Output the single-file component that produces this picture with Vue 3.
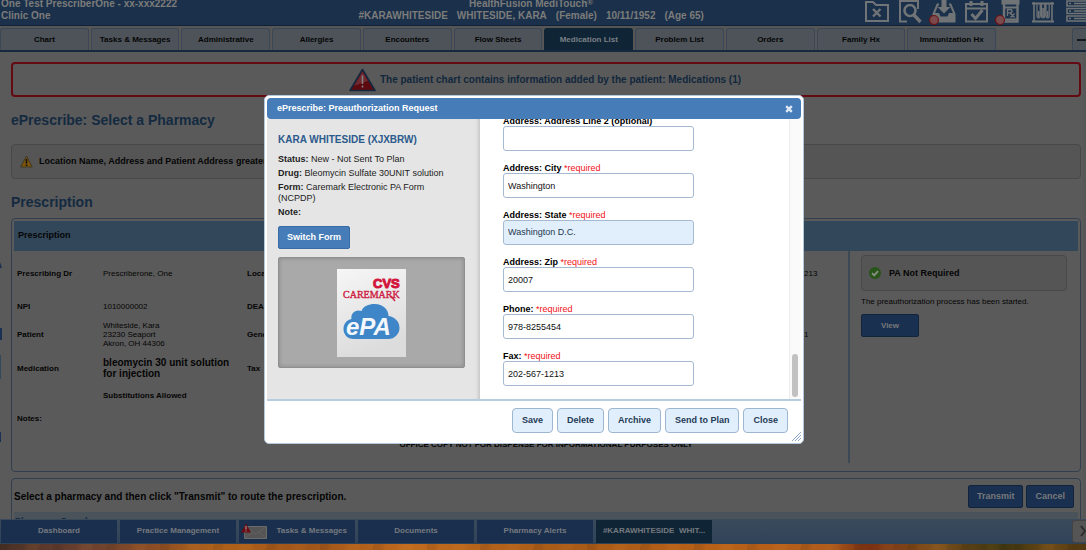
<script setup>
import { ref } from 'vue'

const tabs = ['Chart', 'Tasks & Messages', 'Administrative', 'Allergies', 'Encounters', 'Flow Sheets', 'Medication List', 'Problem List', 'Orders', 'Family Hx', 'Immunization Hx']
const activeTab = 'Medication List'
const patient = ['#KARAWHITESIDE', 'WHITESIDE, KARA', '(Female)', '10/11/1952', '(Age 65)']
const fields = ref([
  { id: 'line2', label: 'Address: Address Line 2 (optional)', required: false, value: '' },
  { id: 'city', label: 'Address: City', required: true, value: 'Washington' },
  { id: 'state', label: 'Address: State', required: true, value: 'Washington D.C.', options: ['Washington D.C.'] },
  { id: 'zip', label: 'Address: Zip', required: true, value: '20007' },
  { id: 'phone', label: 'Phone:', required: true, value: '978-8255454' },
  { id: 'fax', label: 'Fax:', required: true, value: '202-567-1213' }
])
const actions = ['Save', 'Delete', 'Archive', 'Send to Plan', 'Close']
const tasks = [
  { name: 'Dashboard' },
  { name: 'Practice Management' },
  { name: 'Tasks & Messages', mail: true },
  { name: 'Documents' },
  { name: 'Pharmacy Alerts' },
  { name: '#KARAWHITESIDE  WHIT...', active: true }
]
</script>

<template>
  <div class="page">
    <header class="top">
      <div class="who">One Test PrescriberOne - xx-xxx2222<br>Clinic One</div>
      <div class="chart-title">
        <div>HealthFusion MediTouch<sup>®</sup></div>
        <div class="patient"><span v-for="p in patient" :key="p">{{ p }}</span></div>
      </div>
      <div class="tools">
        <button type="button" aria-label="Close chart">
          <svg viewBox="0 0 24 26"><path d="M2 2h7l3 3h12v16H2z" /><path d="M9 9l7.500 7.500M16.500 9L9 16.500" stroke-width="2.400" /></svg>
        </button>
        <button type="button" aria-label="Search">
          <svg viewBox="0 0 24 26"><path d="M10 21.500H3V1h18v8" /><circle cx="13" cy="10.500" r="5.500" stroke-width="2.600" /><path d="M17 15l6.500 7" stroke-width="3.400" /></svg>
        </button>
        <button type="button" aria-label="Inbox">
          <svg viewBox="0 0 24 26"><path d="M9 4.500H7.500L3.500 14v7.500h21V14l-4-9.500H19" /><path class="solid" d="M3 13h6l1.500 3.500h7L19 13h6v9H3z" /><path class="solid" d="M11.500 0h5v7h4L14 13.500 7.500 7h4z" /><circle class="dot" cx="4" cy="20" r="4.500" /></svg>
        </button>
        <button type="button" aria-label="Calendar">
          <svg viewBox="0 0 24 26"><path d="M3 4h21v17.500H3zM3 8.500h21" /><path d="M8 1v5M19 1v5" stroke-width="3" /><path d="M8.500 14l4 4.500 7-8.500" stroke-width="3" /></svg>
        </button>
        <button type="button" aria-label="Prescriptions">
          <svg viewBox="0 0 24 26"><path d="M5.500 0h18v4.500h-18z" class="solid" /><path d="M8 4v17.500h13.500V4" stroke-width="2.400" /><path d="M8 7.500h13M8 19.500h13" stroke-width="1.800" /><path d="M11.500 16V9.500h2.500q2 0 2 1.700t-2 1.700h-2.500M14 13l4.500 4.500M18.500 13.500l-4 4" stroke-width="1.300" /><circle class="dot" cx="4" cy="20" r="4.500" /></svg>
        </button>
        <button type="button" aria-label="Labs">
          <svg viewBox="0 0 24 26"><path d="M3 3.500h22M3 21.500h22" /><path d="M5 2v19M23 2v19" stroke-width="1.600" /><path d="M8 4v12a1.600 2 0 0 0 3.200 0V4M12.500 4v12a1.600 2 0 0 0 3.200 0V4M17 4v12a1.600 2 0 0 0 3.200 0V4" stroke-width="1.200" /><path d="M9.600 11v6M14.100 8v9M18.600 11v6" stroke-width="1.600" /></svg>
        </button>
        <button type="button" aria-label="Records">
          <svg viewBox="0 0 24 26"><path d="M5 1h22v5H5zM5 8.500h22v5H5zM5 16h22v5H5z" stroke-width="1.600" /><path d="M7 3.500h2M12 3.500h12M7 11h2M12 11h12M7 18.500h2M12 18.500h12" stroke-width="1.300" /></svg>
        </button>
      </div>
    </header>

    <nav class="tabs">
      <button v-for="t in tabs" :key="t" type="button" :class="{ active: t === activeTab }">{{ t }}</button>
      <button type="button" class="more" aria-label="More tabs"><svg viewBox="0 0 10 8"><path d="M0 4h12" /></svg></button>
    </nav>

    <main>
      <svg class="edge" viewBox="0 0 2 190" aria-hidden="true">
        <path d="M0 0l2 6H0z" fill="#1a3153" /><path d="M0 66h2v12H0z" fill="#1a3153" /><path d="M0 93h1v24H0z" fill="#33475c" /><path d="M0 170h1v10H0z" fill="#1a3153" />
      </svg>
      <div class="alert">
        <svg class="warn" viewBox="0 0 27 24"><path d="M13.500 1.500L26 22.500H1z" fill="#5c0a10" stroke="#14283e" stroke-width="1.600" stroke-linejoin="round" /><path d="M13.500 3.500L19 13Q12 15 5 18z" fill="#6e2a30" /><path d="M13.500 7.500v8.500M13.500 17.500v2" stroke="#858080" stroke-width="1.600" /></svg>
        <span>The patient chart contains information added by the patient: Medications (1)</span>
      </div>

      <h1>ePrescribe: Select a Pharmacy</h1>
      <div class="note">
        <svg viewBox="0 0 13 13"><path d="M6.500 1L12.300 12H.7z" fill="#7a540c" stroke="#3f3a22" stroke-linejoin="round" /><path d="M6.500 4v4.500M6.500 9.500v1.500" stroke="#111" stroke-width="1.500" /></svg>
        <span>Location Name, Address and Patient Address greater</span>
      </div>

      <h2>Prescription</h2>
      <section class="panel rx">
        <h3>Prescription</h3>
        <div class="rx-body">
          <div class="details">
            <table>
              <colgroup><col class="c1"><col class="c2"><col class="c3"><col></colgroup>
              <tbody>
                <tr class="r1"><th>Prescribing Dr</th><td>Prescriberone, One</td><th>Location</th><td>213</td></tr>
                <tr class="r2"><th>NPI</th><td>1010000002</td><th>DEA</th><td></td></tr>
                <tr class="r3"><th>Patient</th><td>Whiteside, Kara<br>23230 Seaport<br>Akron, OH 44306</td><th>Gender</th><td>1</td></tr>
                <tr class="r4"><th>Medication</th><td class="drug">bleomycin 30 unit solution for injection</td><th>Tax</th><td></td></tr>
                <tr class="r5"><th></th><td><b>Substitutions Allowed</b></td><th></th><td></td></tr>
                <tr class="r6"><th>Notes:</th><td></td><th></th><td></td></tr>
              </tbody>
            </table>
            <p class="office">OFFICE COPY NOT FOR DISPENSE FOR INFORMATIONAL PURPOSES ONLY</p>
          </div>
          <aside>
            <div class="pa">
              <svg viewBox="0 0 12 12"><circle cx="6" cy="6" r="6" fill="#29551a" /><path d="M3 6.200l2.200 2.200L9 4.200" fill="none" stroke="#8a8f88" stroke-width="1.800" /></svg>
              <span>PA Not Required</span>
            </div>
            <p>The preauthorization process has been started.</p>
            <button type="button" class="dark view">View</button>
          </aside>
        </div>
      </section>

      <section class="panel route">
        <div class="route-row">
          <strong>Select a pharmacy and then click "Transmit" to route the prescription.</strong>
          <div class="route-actions">
            <button type="button" class="dark">Transmit</button>
            <button type="button" class="dark">Cancel</button>
          </div>
        </div>
        <h3 class="search">Pharmacy Search</h3>
      </section>
    </main>

    <nav class="taskbar">
      <button v-for="t in tasks" :key="t.name" type="button" :class="{ active: t.active, mail: t.mail }">
        <svg v-if="t.mail" viewBox="0 0 26 16"><path d="M3.500 3.500h22v12h-22z" fill="#555" stroke="#6a6a6a" /><path d="M4 4l10.500 7L25 4M4 15l8-6M25 15l-8-6" fill="none" stroke="#626262" stroke-width="0.800" /><path d="M5 0.500L10 9.500H0z" fill="#6a0c12" /><path d="M5 3v3.500M5 7.500v1" stroke="#aaa" /></svg>
        <span>{{ t.name }}</span>
      </button>
      <button type="button" class="next" aria-label="Next"><svg viewBox="0 0 14 22"><path d="M8 6l4 5-4 5" /></svg></button>
    </nav>
    <div class="wood"></div>

    <div class="dialog" role="dialog" aria-labelledby="dlg-title">
      <div class="dlg-head">
        <span id="dlg-title">ePrescribe: Preauthorization Request</span>
        <button type="button" aria-label="Close"><svg viewBox="0 0 8 8"><path d="M1.200 1.200l5.600 5.600M6.800 1.200L1.200 6.800" /></svg></button>
      </div>
      <div class="dlg-body">
        <div class="summary">
          <h4>KARA WHITESIDE (XJXBRW)</h4>
          <p><b>Status:</b> New - Not Sent To Plan</p>
          <p><b>Drug:</b> Bleomycin Sulfate 30UNIT solution</p>
          <p><b>Form:</b> Caremark Electronic PA Form (NCPDP)</p>
          <p><b>Note:</b></p>
          <button type="button" class="switch">Switch Form</button>
          <div class="logo">
            <svg viewBox="0 0 69 88">
              <defs><linearGradient id="paper" x1="0" y1="0" x2="0.300" y2="1"><stop offset="0" stop-color="#f6f6f6" /><stop offset="1" stop-color="#dcdcdc" /></linearGradient></defs>
              <rect width="69" height="88" fill="url(#paper)" />
              <text x="36" y="19" class="cvs">CVS</text>
              <text x="6" y="29" class="caremark">CAREMARK</text>
              <path d="M54 27l4 5" stroke="#cf1f45" stroke-width="1.400" />
              <path d="M17 70C10 70 6.500 65 6.500 60c0-5 3-9 8-10-1-6 4-10 10-8 2-5 7-7 13-7 9 0 14 6 14 12 7 1 11 6 11 12 0 6-5 11-11 11z" fill="#3f86c8" />
              <text x="9" y="66" class="epa">ePA</text>
            </svg>
          </div>
        </div>
        <form class="fields" @submit.prevent>
          <div v-for="f in fields" :key="f.id" class="field">
            <label :for="f.id">{{ f.label }} <span v-if="f.required">*required</span></label>
            <select v-if="f.options" :id="f.id" v-model="f.value"><option v-for="o in f.options" :key="o">{{ o }}</option></select>
            <input v-else :id="f.id" v-model="f.value" type="text">
          </div>
        </form>
        <div class="scroll"><div class="thumb"></div></div>
      </div>
      <div class="dlg-foot">
        <button v-for="a in actions" :key="a" type="button">{{ a }}</button>
        <svg class="grip" viewBox="0 0 9 9"><path d="M0 9L9 0M3 9l6-6M6 9l3-3" /></svg>
      </div>
    </div>
  </div>
</template>

<style>
body { background: #5a5a5a; }
</style>

<style scoped>
* { box-sizing: border-box; }
.page {
  position: relative;
  display: flex;
  flex-direction: column;
  height: 100vh;
  overflow: hidden;
  background: #5a5a5a;
  color: #050505;
  font: 8px/9px "Liberation Sans", Arial, sans-serif;
}
button { font: inherit; font-weight: bold; padding: 0; margin: 0; border: 0; white-space: nowrap; }
svg { display: block; flex: none; }
h1, h2, h3, h4, p { margin: 0; }

.top {
  display: grid;
  grid-template-columns: 33% auto 1fr;
  align-items: end;
  align-content: end;
  height: 26px;
  flex: none;
  padding-bottom: 1px;
  background: #1b304b;
  border-bottom: 1px solid #0f2238;
  color: #7c7c7a;
  font-size: 10px;
  line-height: 12px;
  font-weight: bold;
  white-space: nowrap;
  overflow: hidden;
}
.who { padding: 0 0 2px 1px; }
.chart-title { text-align: center; padding-bottom: 2px; }
.chart-title sup { font-size: 8px; line-height: 0; vertical-align: 2px; }
.patient { display: flex; gap: 9px; }
.tools { display: flex; align-items: flex-start; justify-content: flex-end; gap: 9px; height: 24px; }
.tools button { background: none; width: 24px; }
.tools svg { width: 24px; height: 26px; overflow: visible; fill: none; stroke: #717476; stroke-width: 2; }
.tools .solid { fill: #717476; stroke: none; }
.tools .dot { fill: #7a4a4c; stroke: #6b1518; stroke-width: 1.200; }

.tabs {
  display: flex;
  gap: 2px;
  height: 26px;
  flex: none;
  padding-top: 2px;
  background: #565656;
  border-bottom: 2px solid #16293f;
}
.tabs button {
  flex: 1 1 0;
  min-width: 0;
  background: #4d5359;
  border: 1px solid #3b4756;
  border-bottom: 0;
  border-radius: 3px 3px 0 0;
  color: #050505;
}
.tabs button.active { background: #0f2536; border-color: #0f2536; color: #7a8086; }
.tabs button.more { flex: 0 0 14px; margin-left: 74px; border-right: 0; border-radius: 3px 0 0 0; }
.more svg { width: 10px; height: 8px; margin-left: 4px; stroke: #15181c; stroke-width: 2; }

main {
  position: relative;
  flex: 1 1 0;
  min-height: 0;
  overflow: hidden;
  padding: 10px 2px 0 11px;
  border-right: 3px solid #575757;
}
.edge { position: absolute; left: 0; top: 210px; width: 2px; height: 190px; }
.alert {
  display: flex;
  align-items: center;
  justify-content: center;
  gap: 4px;
  height: 35px;
  padding-right: 2px;
  border: 2px solid #640a12;
  border-radius: 4px;
  color: #12273c;
  font-size: 10px;
  font-weight: bold;
}
.warn { width: 27px; height: 24px; }
h1, h2 { color: #142a41; font-size: 14px; line-height: 16px; }
h1 { margin-top: 15px; }
.note, .pa {
  display: flex;
  align-items: center;
  background: #555;
  border: 1px solid #484848;
  border-radius: 4px;
  font-size: 9px;
  font-weight: bold;
}
.note { height: 35px; margin-top: 16px; padding: 0 8px; gap: 6px; }
.note svg { width: 13px; height: 13px; }
h2 { margin-top: 15px; }
.panel { border: 1px solid #313f4e; border-radius: 4px; padding: 2px; }
.rx { margin-top: 8px; height: 254px; }
.panel h3 { height: 30px; padding: 0 4px; background: #33475a; font-size: 9px; line-height: 28px; }
.rx-body { display: flex; }
.details { flex: 1 1 0; height: 212px; border-right: 2px solid #3b4856; padding: 4px 0 0 3px; }
table { width: 100%; table-layout: fixed; border-collapse: collapse; }
th, td { padding: 0; text-align: left; vertical-align: middle; }
.c1 { width: 86px; }
.c2 { width: 144px; }
.c3 { width: 557px; }
.r1 { height: 37px; }
.r2 { height: 29px; }
.r3 { height: 27px; }
.r4 { height: 40px; }
.r5 { height: 14px; }
.r6 { height: 32px; }
.r4 .drug { padding-right: 12px; font-size: 10px; line-height: 11px; font-weight: bold; }
.office { margin-left: 227px; padding-top: 6px; text-align: center; font-weight: bold; }
aside { flex: 0 0 228px; padding: 4px 11px 0; }
.pa { height: 36px; padding: 0 7px; gap: 8px; }
.pa svg { width: 12px; height: 12px; }
aside p { margin: 6px 0 7px; line-height: 10px; }
.dark {
  height: 23px;
  background: #1a3050;
  border: 1px solid #12243c;
  border-radius: 2px;
  color: #77797b;
  font-size: 9px;
}
.view { width: 58px; font-size: 8px; }
.route { margin-top: 6px; height: 80px; }
.route-row { display: flex; align-items: center; justify-content: space-between; height: 31px; padding: 0 4px 0 0; font-size: 10px; }
.route-actions { display: flex; gap: 3px; }
.route-actions .dark { padding: 0 8px; }
.panel h3.search { padding: 4px 1px; background: #4a525a; line-height: 10px; color: #142a41; }

.taskbar {
  display: flex;
  align-items: center;
  gap: 3px;
  height: 25px;
  flex: none;
  padding-left: 1px;
  background: linear-gradient(#3a4a5b, #2f4358);
}
.taskbar button { display: flex; align-items: center; justify-content: center; flex: 0 1 116px; min-width: 0; height: 23px; padding-bottom: 2px; background: #1a2f4e; color: #75797e; }
.taskbar button.active { background: #0f2536; }
.taskbar button.mail { justify-content: space-between; padding: 0 8px 2px 2px; }
.taskbar span { white-space: pre; }
.mail svg { width: 26px; height: 16px; }
.taskbar button.next { flex: 0 0 14px; margin-left: auto; background: #555; border: 1px solid #444; border-right: 0; border-radius: 3px 0 0 3px; }
.next svg { width: 14px; height: 22px; fill: none; stroke: #2c2c2c; stroke-width: 2; }
.wood {
  height: 6px;
  flex: none;
  background:
    repeating-linear-gradient(97deg, rgba(0, 0, 0, 0.080) 0 7px, transparent 12px 23px, rgba(255, 160, 60, 0.080) 29px 37px, transparent 41px 53px),
    linear-gradient(90deg, #4a3026, #6a4030 8%, #8a4c24 14%, #b0621a 20%, #a0541a 28%, #c06a1e 38%, #a85a18 52%, #b86018 66%, #b05c1c 76%, #7a3012 80%, #80501c 86%, #3a3410 92%, #6a4816 97%, #503810);
}

.dialog {
  position: absolute;
  left: 264px;
  top: 95px;
  width: 540px;
  padding: 2px 2px 0;
  background: #fff;
  border: 1px solid #b4c7dd;
  border-radius: 5px;
  color: #222;
  font-size: 9px;
  line-height: 11px;
}
.dlg-head {
  display: flex;
  align-items: center;
  justify-content: space-between;
  height: 21px;
  padding: 0 8px 0 10px;
  background: #467cb8;
  border-radius: 4px;
  color: #fff;
  font-weight: bold;
}
.dlg-head button { background: none; }
.dlg-head svg { width: 8px; height: 8px; stroke: #dfe9f4; stroke-width: 2.400; }
.dlg-body { display: flex; height: 281px; }
.summary {
  flex: 0 0 213px;
  padding: 14px 15px 0 11px;
  background: #e5e5e5;
  box-shadow: inset -4px 0 4px -3px #bbb;
}
h4 { margin-bottom: 7px; color: #2b5a8c; font-size: 10px; line-height: 14px; }
.summary p { margin-bottom: 3px; padding-right: 12px; }
.switch { height: 23px; margin: 5px 0 8px; padding: 0 8px; background: #467cb8; border: 1px solid #376ba6; border-radius: 2px; color: #fff; }
.logo {
  display: flex;
  align-items: center;
  justify-content: center;
  height: 111px;
  background: #a9a9a9;
  border: 1px solid #8f8f8f;
  border-radius: 2px;
  box-shadow: inset 0 0 4px #888;
}
.logo svg { width: 69px; height: 88px; }
.cvs { font: bold 13px "Liberation Sans", Arial, sans-serif; fill: #d3143c; stroke: #d3143c; stroke-width: 1; }
.caremark { font: 10px "Liberation Serif", "Times New Roman", serif; fill: #cf1f45; stroke: #cf1f45; stroke-width: 0.400; }
.epa { font: italic bold 24px "Liberation Sans", Arial, sans-serif; fill: #f4f8fc; }
.fields {
  flex: 1 1 0;
  display: flex;
  flex-direction: column;
  justify-content: flex-end;
  gap: 11px;
  padding: 0 0 14px 23px;
  overflow: hidden;
  color: #000;
}
.field { flex: none; width: 191px; }
label { display: block; padding-top: 1px; font-weight: bold; line-height: 10px; }
label span { color: #f01020; font-weight: normal; }
input, select {
  display: block;
  width: 100%;
  height: 25px;
  margin: 0;
  padding: 0 4px;
  border: 1px solid #a5b9d2;
  border-radius: 3px;
  background: #fff;
  color: #111;
  font: inherit;
  appearance: none;
}
select { background: #e1effd; color: #23384c; }
.scroll { display: flex; flex-direction: column; justify-content: flex-end; flex: 0 0 12px; padding: 0 3px 3px 2px; background: #fafafa; border-left: 1px solid #ececec; }
.thumb { height: 43px; border-radius: 3px; background: #c1c1c1; }
.dlg-foot {
  position: relative;
  display: flex;
  justify-content: flex-end;
  gap: 4px;
  padding: 7px 13px 10px;
  margin-top: -1px;
  border-top: 2px solid #b8cbe0;
}
.dlg-foot button { height: 25px; padding: 0 9px; background: #e1effd; border: 1px solid #9db6d2; border-radius: 4px; color: #1f3b57; }
.grip { position: absolute; right: 0; bottom: 2px; width: 9px; height: 9px; stroke: #8fa9c6; fill: none; }
</style>
